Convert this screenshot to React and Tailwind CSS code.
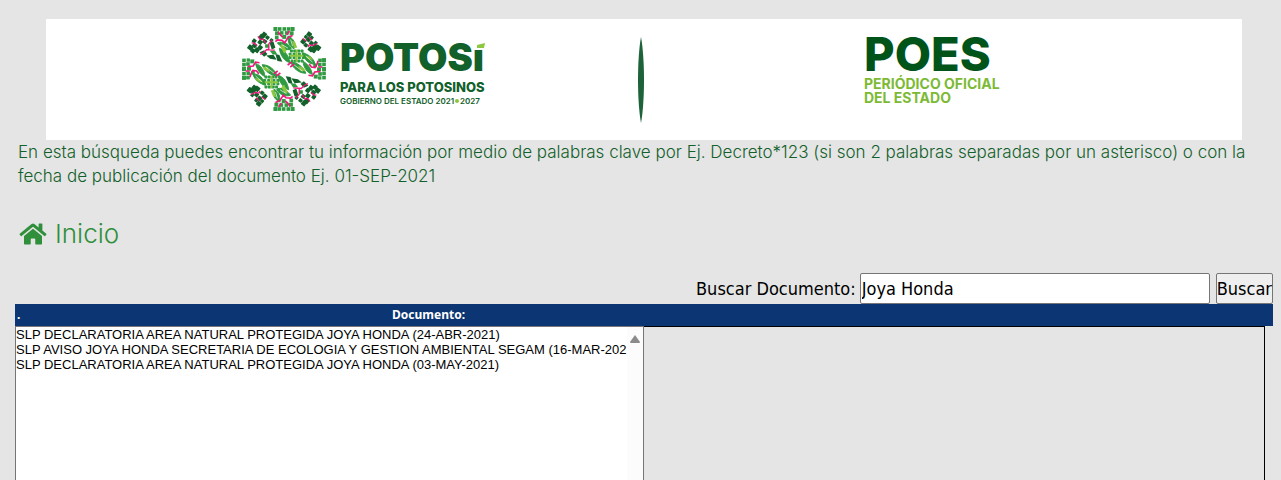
import { useState } from 'react'

const documents = [
  'SLP DECLARATORIA AREA NATURAL PROTEGIDA JOYA HONDA (24-ABR-2021)',
  'SLP AVISO JOYA HONDA SECRETARIA DE ECOLOGIA Y GESTION AMBIENTAL SEGAM (16-MAR-2021)',
  'SLP DECLARATORIA AREA NATURAL PROTEGIDA JOYA HONDA (03-MAY-2021)',
]

// centres of the woven cells in the emblem: [x, y, size]
const darkCells = [
  [62, 98, 15], [75, 92, 13], [70, 108, 13], [82, 106, 14], [74, 78, 12], [92, 98, 13],
  [96, 66, 15], [104, 59, 14], [114, 68, 11], [92, 82, 13], [106, 80, 12], [126, 76, 10],
  [222, 80, 14], [230, 66, 10], [240, 58, 14], [238, 74, 13], [230, 91, 11], [248, 68, 10],
  [247, 85, 12], [245, 103, 15], [258, 98, 17], [267, 99, 15], [254, 108, 12], [260, 84, 10],
]

const greenCells = [
  [138, 42, 12], [151, 42, 11], [165, 42, 11], [178, 42, 11], [190, 42, 12],
  [143, 55, 12], [157, 54, 11], [172, 54, 11], [187, 55, 12], [142, 68, 11], [165, 66, 12], [180, 68, 11],
  [285, 136, 12], [273, 137, 11], [285, 149, 11], [272, 150, 11], [285, 163, 12], [270, 164, 12],
  [285, 176, 11], [273, 178, 11], [285, 189, 11], [260, 186, 12], [258, 152, 11], [272, 190, 10],
]

const flowerCells = [
  [186, 108], [196, 108], [208, 108], [218, 108],
  [182, 118], [194, 118], [210, 118], [222, 118],
  [182, 128], [194, 128], [210, 128], [222, 128],
  [188, 138], [198, 138], [208, 138], [218, 138],
]

function Cell({ x, y, size }) {
  return <rect x={x - size / 2} y={y - size / 2} width={size} height={size} rx="2" transform={`rotate(38 ${x} ${y})`} />
}

// One half of the round emblem, the other half is the same turned 180 degrees
function EmblemHalf() {
  return (
    <g>
      {/* band blocks */}
      <g fill="#2f9a41">
        {greenCells.map(([x, y, size]) => (
          <rect key={`${x}-${y}`} x={x - size / 2} y={y - size / 2} width={size} height={size} />
        ))}
      </g>

      {/* leaves of the curved band */}
      <g fill="#2f9a41" stroke="#2f9a41" strokeWidth="3">
        <path d="M144 84C158 78 178 84 186 102C178 108 160 104 144 84Z" />
        <path d="M178 66C192 68 200 86 194 102C180 94 174 80 178 66Z" />
        <path d="M150 100C164 106 178 120 182 144C166 140 152 122 150 100Z" />
        <path d="M220 114C236 118 254 130 258 148C240 150 224 134 220 114Z" />
        <path d="M184 142C200 142 222 154 230 176C210 176 192 162 184 142Z" />
        <path d="M222 140C236 148 246 160 250 180C234 174 222 158 222 140Z" />
      </g>
      <g fill="#2f9a41">
        {flowerCells.map(([x, y]) => (
          <rect key={`${x}-${y}`} x={x - 4} y={y - 4} width="9" height="9" rx="2" />
        ))}
      </g>
      <g fill="#8dc63f">
        <path d="M188 78L197 80L204 98L194 100Z" />
        <path d="M152 92L162 90L172 108L164 116Z" />
        <path d="M228 122L244 126L252 136L236 132Z" />
        <path d="M206 154L220 158L230 170L214 168Z" />
        <path d="M199 104H205V142H199ZM182 120H222V126H182Z" />
      </g>
      <g fill="none" stroke="#fff" strokeWidth="2">
        <path d="M156 88L176 100M184 74L190 94M230 124L250 142M194 150L220 170" />
      </g>
      <g fill="none" stroke="#f0187c" strokeWidth="5">
        <path d="M138 80L144 75L158 76L166 84L176 68L190 62M146 50L153 60L160 67M180 48L173 60" />
        <path d="M175 151L187 142M183 157L195 148" />
        <path d="M240 148L247 157L258 159L264 148L267 138M238 182L250 184L257 172L274 170M268 157L280 157" />
      </g>

      {/* large wedge */}
      <g fill="#12602a">
        {darkCells.map(([x, y, size]) => (
          <Cell key={`${x}-${y}`} x={x} y={y} size={size} />
        ))}
        <path d="M90 112L104 106L114 118L104 126Z" />
        <path d="M110 122L132 120L142 135L122 132Z" />
        <path d="M138 118L150 121L159 141L144 139Z" />
        <path d="M120 83L132 80L138 99L127 104Z" />
      </g>
      <g fill="#2f9a41">
        <path d="M107 88H119V99H107ZM121 108L137 108L144 119L130 119Z" />
      </g>
      <g fill="none" stroke="#f0187c" strokeWidth="4">
        <path d="M66 84L74 85L82 92M85 64L92 74L100 72L108 84M92 119L102 114L112 104L136 106M118 104L118 87L128 75" />
        <path d="M221 71L232 79M236 97L240 90L252 92L264 85M240 67L248 76" />
      </g>
    </g>
  )
}

function Emblem() {
  return (
    <svg viewBox="37 36 254 254" className="size-21 shrink-0" aria-hidden="true">
      <EmblemHalf />
      <g transform="rotate(180 164 163)">
        <EmblemHalf />
      </g>
    </svg>
  )
}

function Banner() {
  return (
    <header className="ml-[46px] mr-[39px] mt-[19px] flex h-[121px] bg-white">
      <div className="flex flex-1 items-start pl-[196px] pr-[18px] pt-2">
        <Emblem />
        <div className="ml-[14px] mt-2 whitespace-nowrap font-['Inter'] text-[#12602a]">
          <div className="flex items-start text-[38px]/[44px] font-black">
            POTOS
            <span className="relative">
              ı
              <svg viewBox="0 0 8 5" className="absolute left-1 top-2 h-[5px] w-2" aria-hidden="true">
                <path d="M0 2L8 0L7 5H0Z" fill="#8dc63f" />
              </svg>
            </span>
          </div>
          <div className="text-[13px]/4 font-extrabold">PARA LOS POTOSINOS</div>
          <div className="flex items-center text-[8px]/3 font-semibold">
            GOBIERNO DEL ESTADO 2021
            <span className="mx-px size-1 rounded-full bg-[#8dc63f]" />
            2027
          </div>
        </div>
      </div>
      <svg viewBox="0 0 6 86" className="mt-[18px] h-[86px] w-[6px]" aria-hidden="true">
        <path d="M3 0C7 22 7 64 3 86C-1 64 -1 22 3 0Z" fill="#1d6238" />
      </svg>
      <div className="flex-1 whitespace-nowrap pl-[220px] pt-[11px] font-['Inter']">
        <div className="text-[47px]/[47px] font-extrabold text-[#00541a]">POES</div>
        <div className="text-sm/[14px] font-bold text-[#7cba35]">
          PERIÓDICO OFICIAL
          <br />
          DEL ESTADO
        </div>
      </div>
    </header>
  )
}

export default function App() {
  const [query, setQuery] = useState('Joya Honda')

  return (
    <div className="flex min-h-screen flex-col bg-[#e5e5e5] text-black">
      <Banner />

      <p className="pl-[18px] pr-6 font-['Inter'] text-[17px]/6 font-light text-[#12602a]">
        En esta búsqueda puedes encontrar tu información por medio de palabras clave por Ej. Decreto*123 (si son 2 palabras separadas por un asterisco) o con la fecha de publicación del documento Ej. 01-SEP-2021
      </p>

      <a href="#inicio" className="ml-[19px] mt-7 flex items-center gap-2 self-start font-['Inter'] text-[26px]/9 font-light text-[#2f8f3a]">
        <svg viewBox="0 0 576 512" className="h-6 w-7" fill="currentColor" aria-hidden="true">
          <path d="M280.37 148.26L96 300.11V464a16 16 0 0 0 16 16l112.06-.29a16 16 0 0 0 15.92-16V368a16 16 0 0 1 16-16h64a16 16 0 0 1 16 16v95.64a16 16 0 0 0 16 16.05L464 480a16 16 0 0 0 16-16V300L295.67 148.26a12.19 12.19 0 0 0-15.3 0zM571.6 251.47L488 182.56V44.05a12 12 0 0 0-12-12h-56a12 12 0 0 0-12 12v72.61L318.47 43a48 48 0 0 0-61 0L4.34 251.47a12 12 0 0 0-1.6 16.9l25.5 31A12 12 0 0 0 45.15 301l235.22-193.74a12.19 12.19 0 0 1 15.3 0L530.9 301a12 12 0 0 0 16.9-1.6l25.5-31a12 12 0 0 0-1.7-16.93z" />
        </svg>
        Inicio
      </a>

      <main className="ml-[15px] mr-2 mt-[21px] flex flex-1 flex-col">
        <form onSubmit={e => e.preventDefault()} className="flex items-center justify-end font-['DejaVu_Sans_Condensed','DejaVu_Sans'] text-lg/6">
          <label htmlFor="buscar" className="mr-1">Buscar Documento:</label>
          <input
            id="buscar"
            type="text"
            value={query}
            onChange={e => setQuery(e.target.value)}
            className="mr-[6px] h-[31px] w-[350px] rounded-xs border border-[#767676] bg-white px-px"
          />
          <button type="submit" className="h-[31px] rounded-xs border border-[#767676] bg-[#efefef]">Buscar</button>
        </form>

        <div className="flex h-[22px] items-center bg-[#0c3573] pl-[2px] font-['Noto_Sans'] text-xs font-bold text-white">
          <span>.</span>
          <label htmlFor="documentos" className="w-[65%] text-center">Documento:</label>
        </div>

        <div className="flex flex-1">
          <div className="flex w-1/2 border border-b-0 border-[#767676] bg-white">
            <select
              id="documentos"
              size={4}
              className="min-w-0 flex-1 overflow-hidden bg-white font-['Liberation_Sans'] text-[13px]"
            >
              {documents.map(d => (
                <option key={d} value={d} className="h-[15px] min-h-0 p-0 leading-[15px]">{d}</option>
              ))}
            </select>
            <div className="flex w-4 justify-center bg-[#fcfcfc] pt-2" aria-hidden="true">
              <svg viewBox="0 0 10 8" className="h-2 w-[10px]">
                <path d="M5 0L10 7Q10 8 9 8H1Q0 8 0 7Z" fill="#8b8b8b" />
              </svg>
            </div>
          </div>
          <div className="mr-2 flex-1 border border-b-0 border-l-0 border-black" />
        </div>
      </main>
    </div>
  )
}
